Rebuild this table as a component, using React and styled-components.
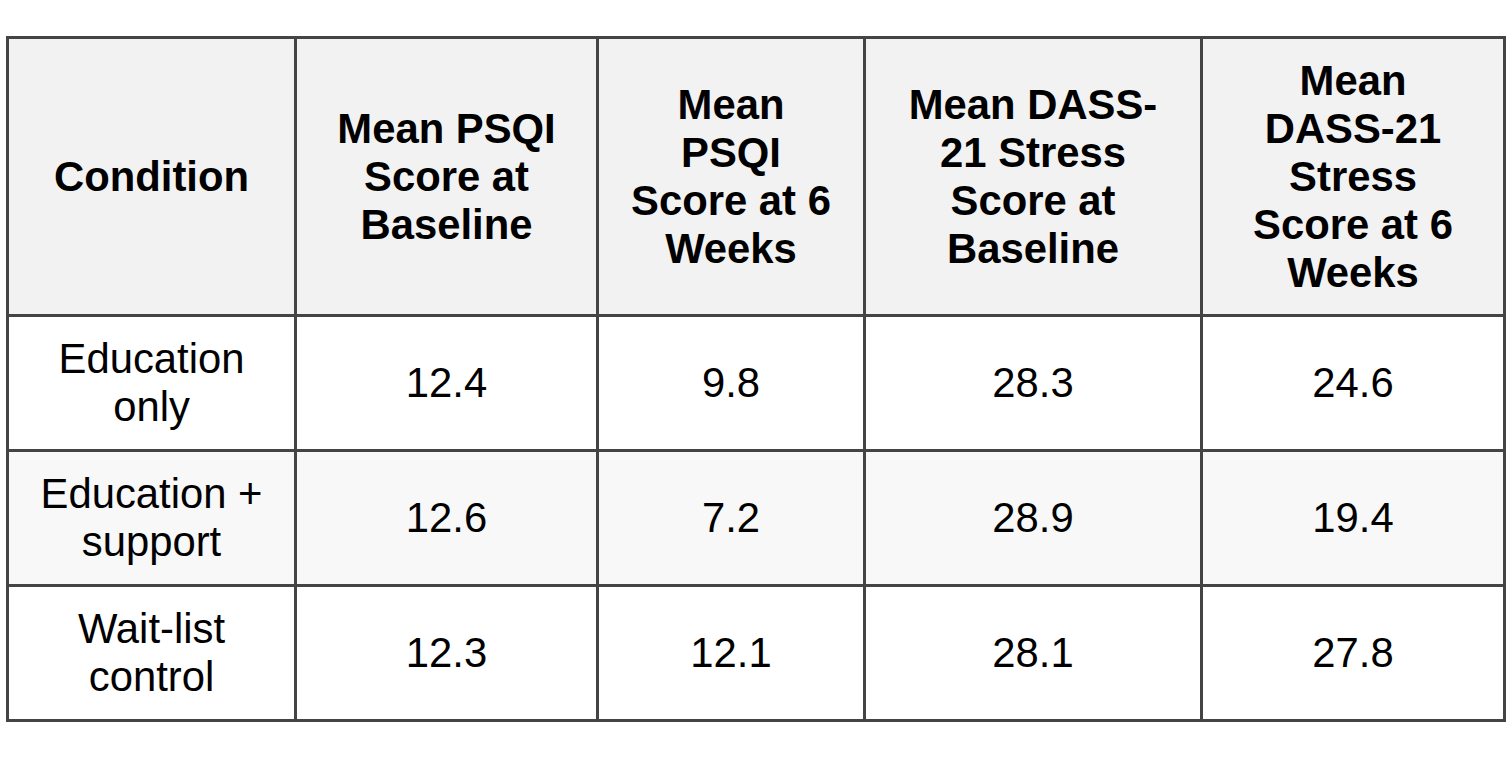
import React from "react";
import styled, { createGlobalStyle } from "styled-components";

const GlobalStyle = createGlobalStyle`
  * {
    box-sizing: border-box;
  }
  body {
    margin: 0;
    background: #ffffff;
    font-family: "Liberation Sans", Arial, sans-serif;
  }
`;

const Page = styled.div`
  padding: 36px 0 0 6px;
`;

const Table = styled.div`
  display: grid;
  grid-template-columns: 288px 302px 267px 337px 303px;
  width: 1500px;
  border-left: 3px solid #444444;
  border-top: 3px solid #444444;
`;

const Cell = styled.div`
  display: flex;
  align-items: center;
  justify-content: center;
  text-align: center;
  height: ${(p) => (p.$head ? "278px" : "135px")};
  padding: 0 12px;
  border-right: 3px solid #444444;
  border-bottom: 3px solid #444444;
  background: ${(p) => p.$bg};
  color: #000000;
  font-size: 41.8px;
  line-height: 48px;
  font-weight: ${(p) => (p.$head ? 700 : 400)};
`;

const headers = [
  ["Condition"],
  ["Mean PSQI", "Score at", "Baseline"],
  ["Mean", "PSQI", "Score at 6", "Weeks"],
  ["Mean DASS-", "21 Stress", "Score at", "Baseline"],
  ["Mean", "DASS-21", "Stress", "Score at 6", "Weeks"],
];

const rows = [
  { label: ["Education", "only"], values: ["12.4", "9.8", "28.3", "24.6"], bg: "#ffffff" },
  { label: ["Education +", "support"], values: ["12.6", "7.2", "28.9", "19.4"], bg: "#f8f8f8" },
  { label: ["Wait-list", "control"], values: ["12.3", "12.1", "28.1", "27.8"], bg: "#ffffff" },
];

const Lines = ({ lines }) =>
  lines.map((line, i) => (
    <React.Fragment key={i}>
      {i > 0 && <br />}
      {line}
    </React.Fragment>
  ));

export default function App() {
  return (
    <>
      <GlobalStyle />
      <Page>
        <Table role="table">
          {headers.map((h, i) => (
            <Cell key={i} $head $bg="#f2f2f2" role="columnheader">
              <span>
                <Lines lines={h} />
              </span>
            </Cell>
          ))}
          {rows.map((row, r) => (
            <React.Fragment key={r}>
              <Cell $bg={row.bg} role="cell">
                <span>
                  <Lines lines={row.label} />
                </span>
              </Cell>
              {row.values.map((v, c) => (
                <Cell key={c} $bg={row.bg} role="cell">
                  {v}
                </Cell>
              ))}
            </React.Fragment>
          ))}
        </Table>
      </Page>
    </>
  );
}
